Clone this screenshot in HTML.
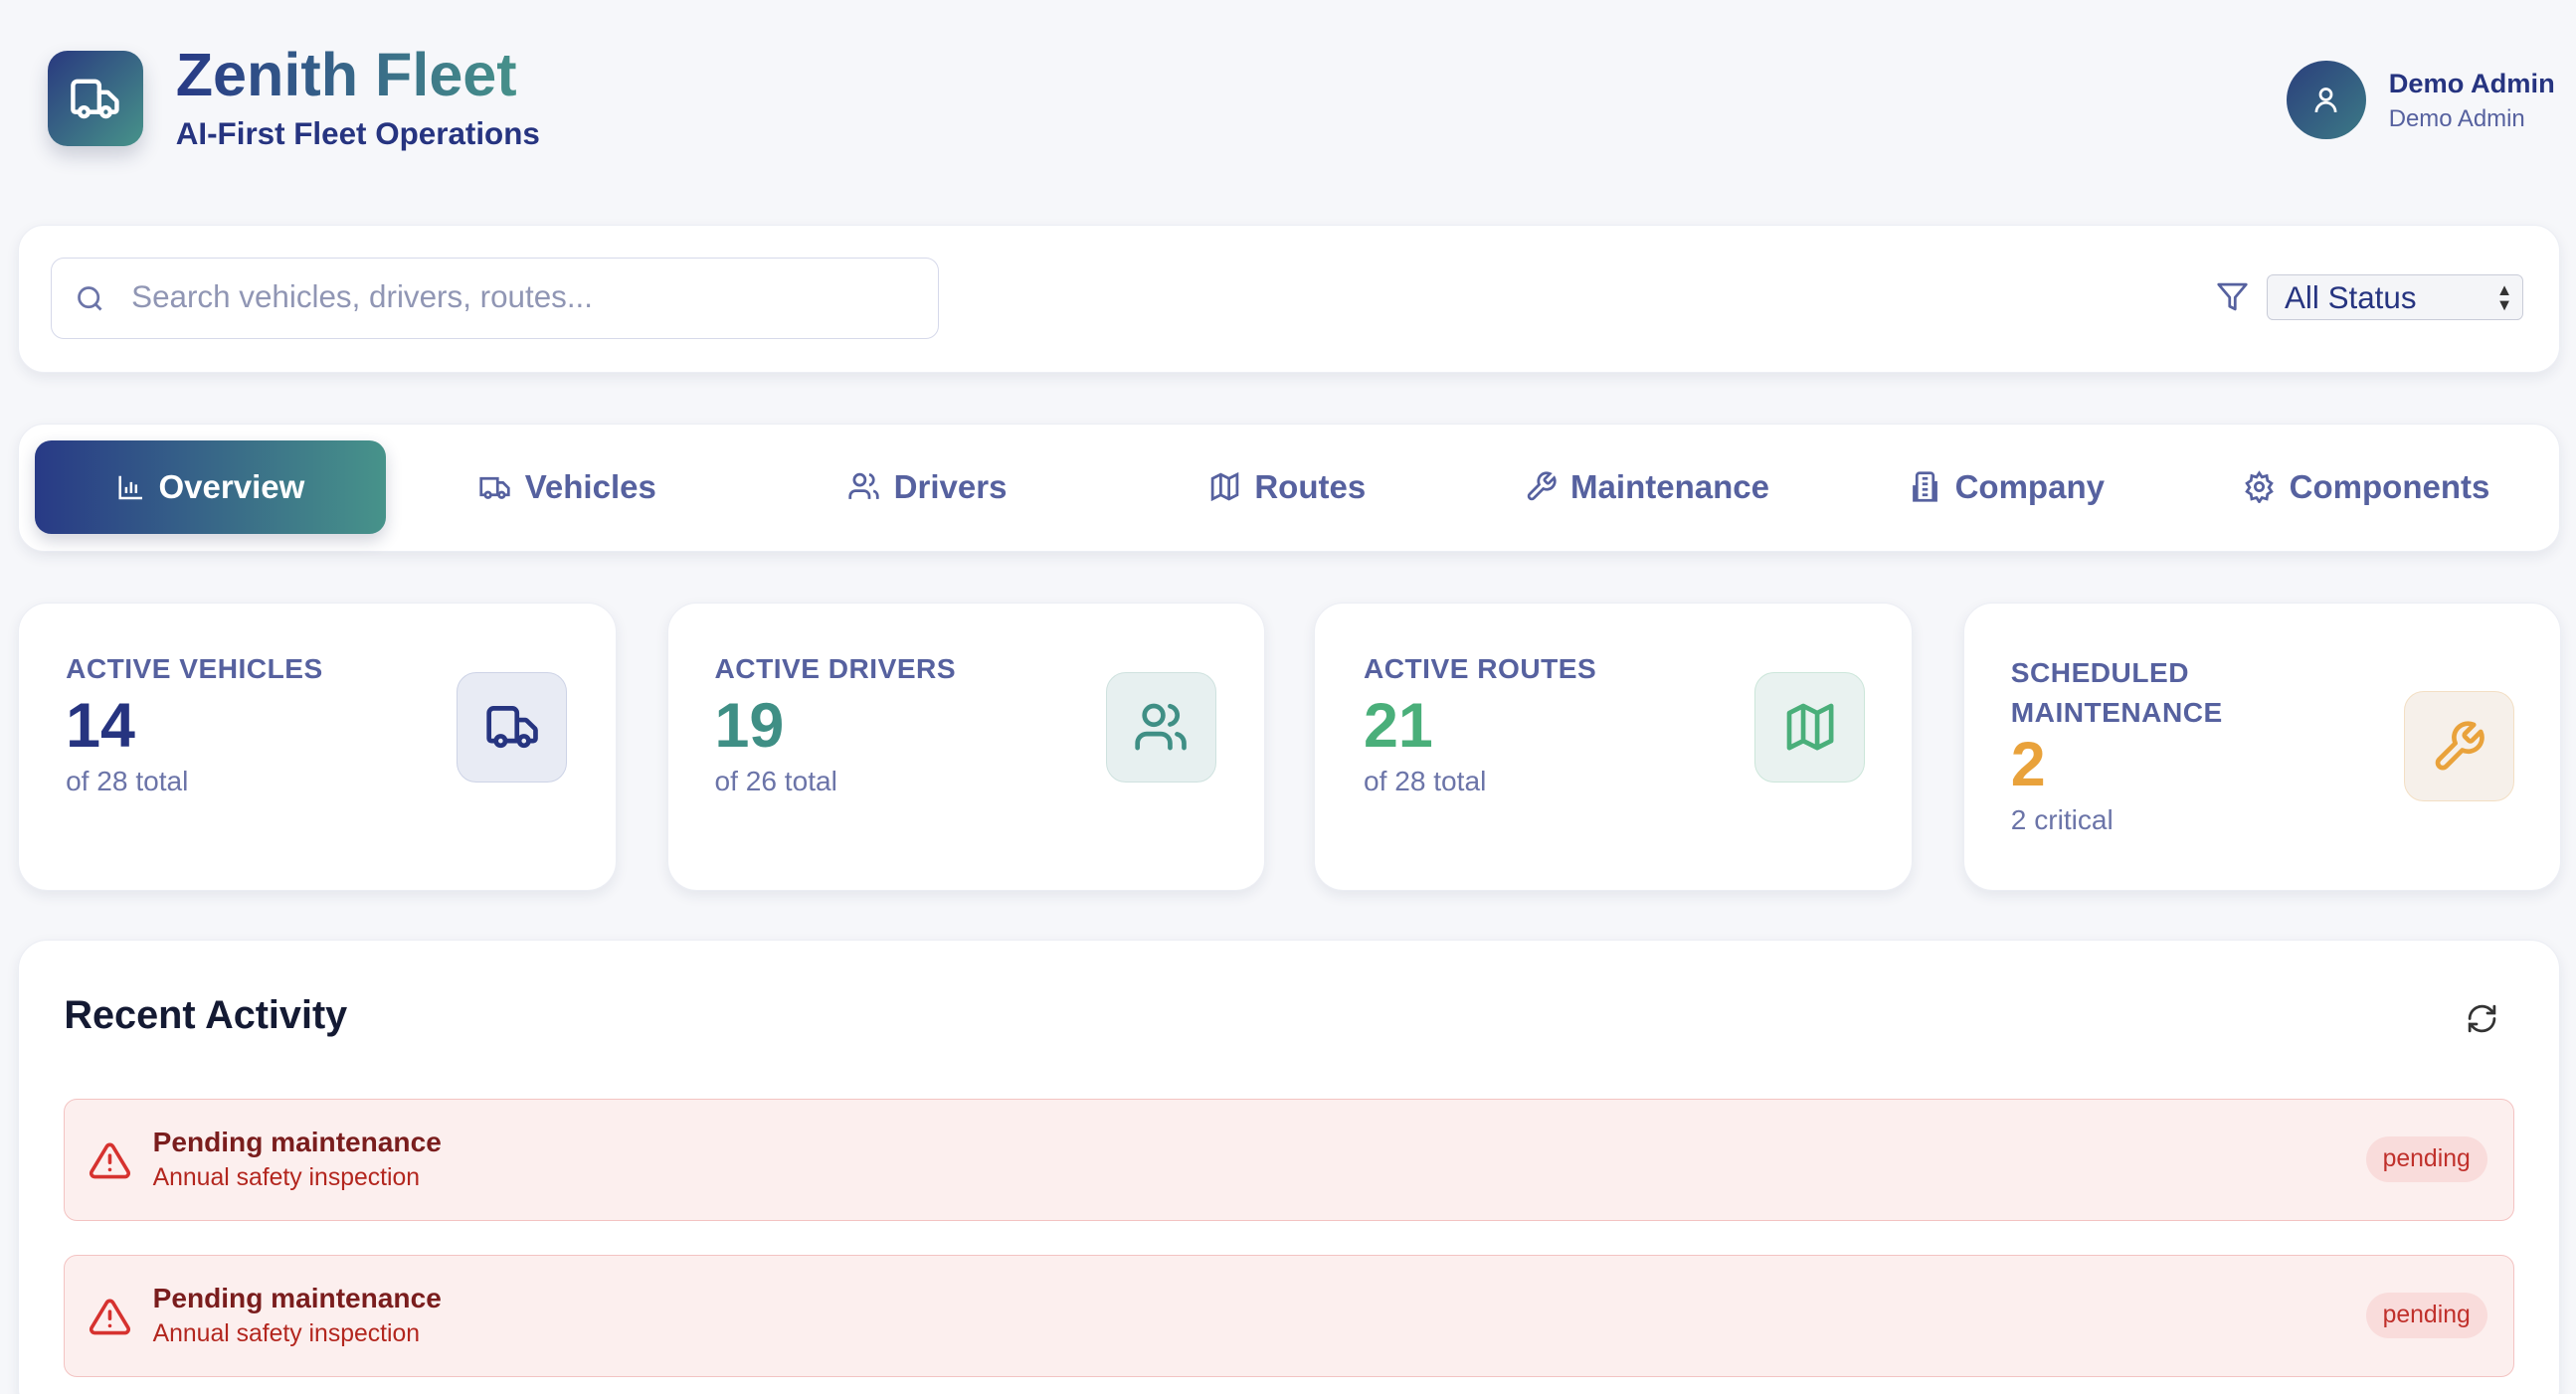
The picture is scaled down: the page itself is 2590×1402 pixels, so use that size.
<!DOCTYPE html>
<html><head><meta charset="utf-8"><style>
html{margin:0;padding:0;width:2590px;height:1402px;overflow:hidden}
body{margin:0;padding:0;width:1568px;height:849px;overflow:hidden;background:#f6f7fa;font-family:"Liberation Sans",sans-serif;zoom:1.6518;position:relative}
.abs{position:absolute}
.card{position:absolute;background:#fff;border:1px solid #eceef4;box-shadow:0 3px 8px rgba(30,40,80,.08)}
.lbl{font-size:17px;font-weight:bold;color:#56619f;letter-spacing:.3px}
.sub{font-size:17px;color:#6b74a8}
.num{font-size:38px;font-weight:bold}
.ib{position:absolute;width:66px;height:66px;border-radius:12px;display:flex;align-items:center;justify-content:center}
.tab{position:absolute;top:268px;height:57px;width:219px;display:flex;align-items:center;justify-content:center;font-size:20px;font-weight:bold;color:#56619f;gap:8px}
.act{position:absolute;left:39px;width:1490px;height:73px;background:#fcefee;border:1px solid #f3c3c2;border-radius:8px}
</style></head><body>
<div class="abs" style="left:29px;top:31px;width:58px;height:58px;border-radius:12px;background:linear-gradient(135deg,#29397f,#47938a);box-shadow:0 6px 12px rgba(30,40,80,.2);display:flex;align-items:center;justify-content:center">
<svg width="32" height="32" viewBox="0 0 24 24" fill="none" stroke="#fff" stroke-width="2" stroke-linecap="round" stroke-linejoin="round"><path d="M14 18V6a2 2 0 0 0-2-2H4a2 2 0 0 0-2 2v11a1 1 0 0 0 1 1h2"/><path d="M15 18H9"/><path d="M19 18h2a1 1 0 0 0 1-1v-3.65a1 1 0 0 0-.22-.62L18.3 9.38a1 1 0 0 0-.78-.38H14"/><circle cx="17" cy="18" r="2"/><circle cx="7" cy="18" r="2"/></svg></div>
<div class="abs" style="left:107px;top:24px;font-size:37px;font-weight:bold;background:linear-gradient(90deg,#283a86,#46918a);-webkit-background-clip:text;color:transparent">Zenith Fleet</div>
<div class="abs" style="left:107px;top:71px;font-size:19px;color:#263480;font-weight:bold">AI-First Fleet Operations</div>
<div class="abs" style="left:1392px;top:37px;width:48px;height:48px;border-radius:50%;background:linear-gradient(135deg,#2b3f7c,#3c7a86);display:flex;align-items:center;justify-content:center">
<svg width="20" height="20" viewBox="0 0 24 24" fill="none" stroke="#fff" stroke-width="2"><circle cx="12" cy="8" r="4"/><path d="M5 21a7 7 0 0 1 14 0"/></svg></div>
<div class="abs" style="left:1454px;top:41px;font-size:16.5px;font-weight:bold;color:#263480">Demo Admin</div>
<div class="abs" style="left:1454px;top:64px;font-size:14.5px;color:#56619f">Demo Admin</div>

<div class="card" style="left:11px;top:137px;width:1546px;height:89px;border-radius:16px"></div>
<div class="abs" style="left:31px;top:157px;width:539px;height:48px;border:1px solid #d6d9ea;border-radius:8px;background:#fff"></div>
<svg class="abs" style="left:45px;top:172px" width="20" height="20" viewBox="0 0 24 24" fill="none" stroke="#6b74a8" stroke-width="2"><circle cx="11" cy="11" r="7"/><path d="M20 20l-4-4"/></svg>
<div class="abs" style="left:80px;top:170px;font-size:19px;color:#9096b4">Search vehicles, drivers, routes...</div>
<svg class="abs" style="left:1349px;top:171px" width="20" height="20" viewBox="0 0 24 24" fill="none" stroke="#56619f" stroke-width="2" stroke-linejoin="round"><path d="M22 3H2l8 9.46V19l4 2v-8.54L22 3z"/></svg>
<div class="abs" style="left:1380px;top:167px;width:156px;height:28px;border:1px solid #c9ccd8;border-radius:4px;background:#f4f5f8;font-size:19px;color:#263480;line-height:28px;padding-left:10px;box-sizing:border-box">All Status<span style="position:absolute;right:6px;top:0;font-size:10px;line-height:9px;padding-top:5px;color:#333">▲<br>▼</span></div>

<div class="card" style="left:11px;top:258px;width:1546px;height:77px;border-radius:16px"></div>
<div class="tab" style="left:21px;width:214px;border-radius:10px;background:linear-gradient(90deg,#283a86,#47938a);color:#fff;box-shadow:0 4px 10px rgba(30,40,80,.2)">
<svg width="18" height="18" viewBox="0 0 24 24" fill="none" stroke="#fff" stroke-width="2"><path d="M3 3v18h18M8 17v-5M12 17V8M16 17v-7"/></svg>Overview</div>
<div class="tab" style="left:236px"><svg width="20" height="20" viewBox="0 0 24 24" fill="none" stroke="#56619f" stroke-width="2"><path d="M14 18V6H2v12h3M15 18H9M14 9h4l4 4v5h-3"/><circle cx="17" cy="18" r="2"/><circle cx="7" cy="18" r="2"/></svg>Vehicles</div>
<div class="tab" style="left:455px"><svg width="20" height="20" viewBox="0 0 24 24" fill="none" stroke="#56619f" stroke-width="2"><circle cx="9" cy="7" r="4"/><path d="M2 21v-2a4 4 0 0 1 4-4h6a4 4 0 0 1 4 4v2M16 3.1a4 4 0 0 1 0 7.8M22 21v-2a4 4 0 0 0-3-3.9"/></svg>Drivers</div>
<div class="tab" style="left:674px"><svg width="20" height="20" viewBox="0 0 24 24" fill="none" stroke="#56619f" stroke-width="2"><path d="M3 6l6-3 6 3 6-3v15l-6 3-6-3-6 3zM9 3v15M15 6v15"/></svg>Routes</div>
<div class="tab" style="left:893px"><svg width="20" height="20" viewBox="0 0 24 24" fill="none" stroke="#56619f" stroke-width="2"><path d="M14.7 6.3a1 1 0 0 0 0 1.4l1.6 1.6a1 1 0 0 0 1.4 0l3.77-3.77a6 6 0 0 1-7.94 7.94l-6.91 6.91a2.12 2.12 0 0 1-3-3l6.91-6.91a6 6 0 0 1 7.94-7.94z"/></svg>Maintenance</div>
<div class="tab" style="left:1112px"><svg width="20" height="20" viewBox="0 0 24 24" fill="none" stroke="#56619f" stroke-width="2"><path d="M6 22V4a2 2 0 0 1 2-2h8a2 2 0 0 1 2 2v18zM6 12H4v10h16V9h-2M10 6h4M10 10h4M10 14h4M10 18h4"/></svg>Company</div>
<div class="tab" style="left:1331px"><svg width="20" height="20" viewBox="0 0 24 24" fill="none" stroke="#56619f" stroke-width="2"><circle cx="12" cy="12" r="3"/><path d="M12 2l2 3 3.5-1 .5 3.5 3 2-2 3 2 3-3 2-.5 3.5-3.5-1-2 3-2-3-3.5 1-.5-3.5-3-2 2-3-2-3 3-2 .5-3.5 3.5 1z"/></svg>Components</div>

<div class="card" style="left:11px;top:367px;width:363px;height:174px;border-radius:18px"></div>
<div class="card" style="left:406px;top:367px;width:363px;height:174px;border-radius:18px"></div>
<div class="card" style="left:800px;top:367px;width:363px;height:174px;border-radius:18px"></div>
<div class="card" style="left:1195px;top:367px;width:363px;height:174px;border-radius:18px"></div>

<div class="abs lbl" style="left:40px;top:398px">ACTIVE VEHICLES</div>
<div class="abs num" style="left:40px;top:420px;color:#263480">14</div>
<div class="abs sub" style="left:40px;top:466px">of 28 total</div>
<div class="ib" style="left:278px;top:409px;background:#e8ebf4;border:1px solid #cdd3e6"><svg width="34" height="34" viewBox="0 0 24 24" fill="none" stroke="#263480" stroke-width="2" stroke-linecap="round" stroke-linejoin="round"><path d="M14 18V6a2 2 0 0 0-2-2H4a2 2 0 0 0-2 2v11a1 1 0 0 0 1 1h2"/><path d="M15 18H9"/><path d="M19 18h2a1 1 0 0 0 1-1v-3.65a1 1 0 0 0-.22-.62L18.3 9.38a1 1 0 0 0-.78-.38H14"/><circle cx="17" cy="18" r="2"/><circle cx="7" cy="18" r="2"/></svg></div>

<div class="abs lbl" style="left:435px;top:398px">ACTIVE DRIVERS</div>
<div class="abs num" style="left:435px;top:420px;color:#3f8f85">19</div>
<div class="abs sub" style="left:435px;top:466px">of 26 total</div>
<div class="ib" style="left:673px;top:409px;background:#e7f0f0;border:1px solid #cfe2df"><svg width="34" height="34" viewBox="0 0 24 24" fill="none" stroke="#3f8f85" stroke-width="2" stroke-linecap="round"><circle cx="9" cy="7" r="4"/><path d="M2 21v-2a4 4 0 0 1 4-4h6a4 4 0 0 1 4 4v2M16 3.1a4 4 0 0 1 0 7.8M22 21v-2a4 4 0 0 0-3-3.9"/></svg></div>

<div class="abs lbl" style="left:830px;top:398px">ACTIVE ROUTES</div>
<div class="abs num" style="left:830px;top:420px;color:#4aaf7a">21</div>
<div class="abs sub" style="left:830px;top:466px">of 28 total</div>
<div class="ib" style="left:1068px;top:409px;background:#e9f2f0;border:1px solid #cce6da"><svg width="34" height="34" viewBox="0 0 24 24" fill="none" stroke="#4aaf7a" stroke-width="2" stroke-linejoin="round"><path d="M3 6l6-3 6 3 6-3v15l-6 3-6-3-6 3zM9 3v15M15 6v15"/></svg></div>

<div class="abs lbl" style="left:1224px;top:398px;line-height:24px">SCHEDULED<br>MAINTENANCE</div>
<div class="abs num" style="left:1224px;top:444px;color:#e9a23b">2</div>
<div class="abs sub" style="left:1224px;top:490px">2 critical</div>
<div class="ib" style="left:1463px;top:421px;background:#f6f0ea;border:1px solid #f3dfc4"><svg width="34" height="34" viewBox="0 0 24 24" fill="none" stroke="#e9a23b" stroke-width="2" stroke-linejoin="round"><path d="M14.7 6.3a1 1 0 0 0 0 1.4l1.6 1.6a1 1 0 0 0 1.4 0l3.77-3.77a6 6 0 0 1-7.94 7.94l-6.91 6.91a2.12 2.12 0 0 1-3-3l6.91-6.91a6 6 0 0 1 7.94-7.94z"/></svg></div>

<div class="card" style="left:11px;top:572px;width:1546px;height:290px;border-radius:18px"></div>
<div class="abs" style="left:39px;top:605px;font-size:24px;font-weight:bold;color:#141a33">Recent Activity</div>
<svg class="abs" style="left:1501px;top:610px" width="20" height="20" viewBox="0 0 24 24" fill="none" stroke="#333" stroke-width="2" stroke-linecap="round"><path d="M3 12a9 9 0 0 1 15-6.7L21 8M21 3v5h-5M21 12a9 9 0 0 1-15 6.7L3 16M3 21v-5h5"/></svg>

<div class="act" style="top:669px"></div>
<div class="act" style="top:764px"></div>
<svg class="abs" style="left:54px;top:694px" width="26" height="26" viewBox="0 0 24 24" fill="none" stroke="#d6322f" stroke-width="2" stroke-linecap="round"><path d="M10.3 3.9L1.8 18a2 2 0 0 0 1.7 3h17a2 2 0 0 0 1.7-3L13.7 3.9a2 2 0 0 0-3.4 0zM12 9v4M12 17h.01"/></svg>
<svg class="abs" style="left:54px;top:789px" width="26" height="26" viewBox="0 0 24 24" fill="none" stroke="#d6322f" stroke-width="2" stroke-linecap="round"><path d="M10.3 3.9L1.8 18a2 2 0 0 0 1.7 3h17a2 2 0 0 0 1.7-3L13.7 3.9a2 2 0 0 0-3.4 0zM12 9v4M12 17h.01"/></svg>
<div class="abs" style="left:93px;top:686px;font-size:17px;color:#7a1d1d;font-weight:bold">Pending maintenance</div>
<div class="abs" style="left:93px;top:709px;font-size:15px;color:#b3261e">Annual safety inspection</div>
<div class="abs" style="left:93px;top:781px;font-size:17px;color:#7a1d1d;font-weight:bold">Pending maintenance</div>
<div class="abs" style="left:93px;top:804px;font-size:15px;color:#b3261e">Annual safety inspection</div>
<div class="abs" style="left:1440px;top:692px;width:74px;height:28px;border-radius:14px;background:#f9dcdb;color:#c0302b;font-size:15px;text-align:center;line-height:28px">pending</div>
<div class="abs" style="left:1440px;top:787px;width:74px;height:28px;border-radius:14px;background:#f9dcdb;color:#c0302b;font-size:15px;text-align:center;line-height:28px">pending</div>
</body></html>
